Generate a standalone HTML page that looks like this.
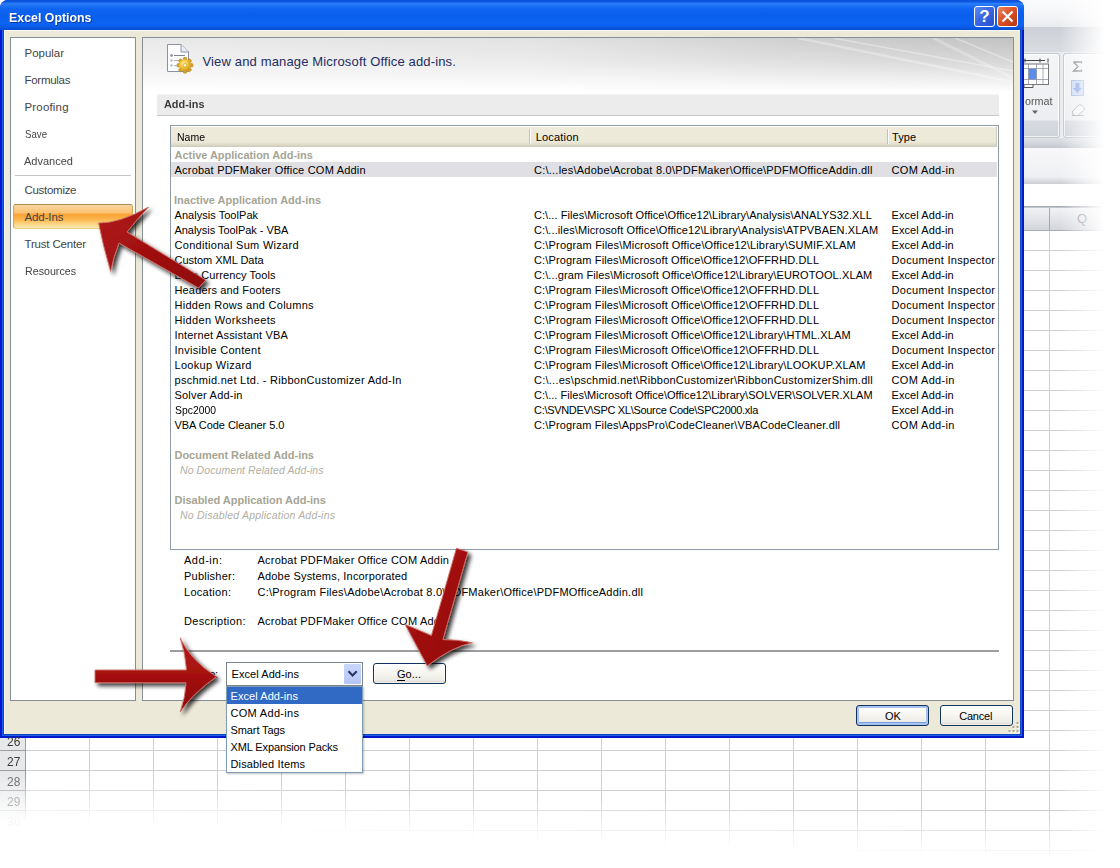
<!DOCTYPE html>
<html><head><meta charset="utf-8"><title>Excel Options</title>
<style>
html,body{margin:0;padding:0}
body{width:1120px;height:868px;overflow:hidden;background:#fff;position:relative;font:11px "Liberation Sans",sans-serif;color:#000}
div,span,svg{position:absolute;box-sizing:border-box}
.t{white-space:pre;line-height:16px;height:16px}
.ttl{text-shadow:1px 1px 0 #0b3aa6}
/* background spreadsheet */
#bg{left:0;top:0;width:1120px;height:868px;overflow:hidden}
#grid{left:0;top:230px;width:1120px;height:640px;
 background:
 repeating-linear-gradient(to right,#cdd1d6 0,#cdd1d6 1px,transparent 1px,transparent 64px) 25px 0,
 repeating-linear-gradient(to bottom,#cdd1d6 0,#cdd1d6 1px,transparent 1px,transparent 20px) 0 0;
 background-color:#fff}
#rowhdr{left:0;top:730px;width:26px;height:140px;background:
 repeating-linear-gradient(to bottom,#9a9da2 0,#9a9da2 1px,transparent 1px,transparent 20px),#e7e8ea;border-right:1px solid #9a9da2}
#fadeB{left:-40px;top:773px;width:1300px;height:220px;transform-origin:0 0;transform:rotate(2.2deg);
 background:linear-gradient(to bottom,rgba(255,255,255,0) 0,rgba(255,255,255,.5) 22px,#fff 46px,#fff 100%)}
#fadeR{left:1040px;top:0;width:80px;height:868px;background:linear-gradient(to right,rgba(255,255,255,0) 20px,rgba(255,255,255,.5) 42px,#fff 64px,#fff 100%)}
/* dialog */
#dlg{left:0;top:0;width:1024px;height:738px;background:#0019cf;border-radius:8px 8px 0 0;overflow:hidden}
#tbar{left:0;top:0;width:1024px;height:30px;background:linear-gradient(to bottom,#0a50d6 0%,#0e5ce6 7%,#2d7ef8 12%,#2074f6 18%,#0e64f0 30%,#0a5fee 55%,#0c63f2 80%,#0a5ae4 91%,#084cce 100%)}
#client{left:4px;top:30px;width:1016px;height:704px;background:#ece9d8;border-top:1px solid #fbfaf4;box-shadow:0 0 0 1px #0c48bc,0 0 0 2px #1e5cee,inset 1px 0 0 #f7f6f0}
.panel{background:#fff;border:1px solid #868f96}
#side{left:10px;top:37px;width:126px;height:664px}
#main{left:142px;top:37px;width:872px;height:664px;overflow:hidden}

/* main content */
#hdr{left:143px;top:38px;width:870px;height:56px;background:linear-gradient(to bottom,rgba(255,255,255,0) 0,rgba(255,255,255,.35) 24px,#fff 54px),linear-gradient(to right,#e9e9e9 0,#e2e2e2 45%,#cfcfcf 75%,#c2c2c2 100%)}
#streak{left:660px;top:38px;width:353px;height:56px;overflow:hidden}
#sec{left:157px;top:94px;width:842px;height:22px;background:#ececec;border-bottom:1px solid #c9c9c9;border-top:1px solid #f4f4f4}
#list{left:170px;top:125px;width:829px;height:425px;border:1px solid #8e9aa6;background:#fff}
#lhdr{left:171px;top:126px;width:826px;height:21px;border-top:1px solid #fff;border-right:1px solid #cfcbbb;background:linear-gradient(to bottom,#eeebdc 0,#ece9d8 15px,#e2decd 17px,#d6d2c2 19px,#cbc7b7 20px)}
.cdiv{width:2px;height:15px;top:129px;border-left:1px solid #c6c2b2;border-right:1px solid #fff}
#selrow{left:171px;top:162px;width:826px;height:15px;background:#dfdfe4}
#hr{left:170px;top:650px;width:829px;height:2px;background:#9d9da1}
#combo{left:226px;top:662px;width:137px;height:24px;border:1px solid #7d858c;background:#fff}
#cbtn{left:344px;top:664px;width:17px;height:20px;border-radius:1px;background:linear-gradient(to bottom,#c9d6fb 0,#c1cffa 50%,#b4c5f5 100%)}
#drop{left:226px;top:686px;width:137px;height:87px;border:1px solid #7f9db9;background:#fff;box-shadow:1px 1px 2px rgba(0,0,0,.25)}
#dsel{left:227px;top:687px;width:135px;height:17px;background:#316ac5}
.btn{height:21px;border:1px solid #12335e;border-radius:3px;background:linear-gradient(to bottom,#fff 0,#f6f5f0 50%,#ecebe5 85%,#d6d0c5 100%);box-shadow:inset 0 0 0 1px rgba(255,255,255,.6)}
#go{left:373px;top:663px;width:73px}
#ok{left:856px;top:705px;width:73px;box-shadow:inset 0 0 0 2px #a9c3f0,inset 0 -1px 0 2px #7b9fe0}
#cancel{left:940px;top:705px;width:73px}
.ul{height:1px;background:#000}
/* sidebar */
#sep{left:15px;top:175px;width:116px;height:1px;background:#c5c5c5}
#sel{left:13px;top:204px;width:120px;height:25px;border:1px solid #d6a84e;border-top-color:#ad8a52;border-bottom-color:#efcf82;border-radius:3px;background:linear-gradient(to bottom,#f9d6a4 0,#fbc373 33%,#f9a234 42%,#fbb64c 62%,#fdd98c 85%,#fee9ac 100%)}

.tb{top:6px;width:21px;height:21px;border:1px solid #fff;border-radius:3px}
#help{left:974px;background:linear-gradient(135deg,#5e8cf6 0,#3a66e4 45%,#2750cf 100%)}
#close{left:997px;background:linear-gradient(135deg,#ec8a64 0,#dc5228 45%,#b8340e 100%)}
#q{left:974px;top:6px;width:21px;height:21px;line-height:21px;text-align:center;color:#fff;font:bold 17px/21px "Liberation Sans",sans-serif}

/* ribbon bg */
#rtop{left:1020px;top:0;width:100px;height:27px;background:linear-gradient(to bottom,#fbfbfc 0,#f3f4f6 60%,#e9ebee 100%)}
#rband{left:1020px;top:27px;width:100px;height:25px;background:linear-gradient(to bottom,#cdd0d6 0,#d3d6db 50%,#d9dce1 100%)}
#rbody{left:1020px;top:52px;width:100px;height:86px;background:#e9ebef}
.rg{top:53px;height:85px;border:1px solid #c3c7ce;border-radius:3px;background:linear-gradient(to bottom,#f4f5f7 0,#eceef1 66px,#d7dae0 67px,#cfd3da 100%);box-shadow:inset 0 0 0 1px rgba(255,255,255,.7)}
#rg1{left:1010px;width:50px}
#rg2{left:1063px;width:70px}
#rbot{left:1020px;top:138px;width:100px;height:10px;background:linear-gradient(to bottom,#dfe1e5 0,#d3d6dc 50%,#c4c8cf 100%)}
#fbar{left:1020px;top:148px;width:100px;height:36px;background:linear-gradient(to bottom,#f8f8fa 0,#eeeff2 80%,#c9ccd2 100%)}
#fbar2{left:1020px;top:184px;width:100px;height:23px;background:#fff;border-bottom:1px solid #a9adb5}
#chdr{left:1020px;top:207px;width:100px;height:24px;background:linear-gradient(to bottom,#f1f2f4 0,#e2e4e8 50%,#d2d5db 100%);border-bottom:1px solid #a9adb5;border-top:1px solid #bfc3ca}
#chdiv{left:1049px;top:208px;width:1px;height:22px;background:#a4a8b0}
</style></head><body>
<div id="bg">
 <div id="grid"></div>
 <div id="rowhdr"></div>
 <div id="rtop"></div><div id="rband"></div><div id="rbody"></div>
 <div id="rg1" class="rg"></div><div id="rg2" class="rg"></div>
 <div id="rbot"></div><div id="fbar"></div><div id="fbar2"></div><div id="chdr"></div><div id="chdiv"></div>
 <svg style="left:1020px;top:52px" width="100" height="86" viewBox="0 0 100 86">
  <path d="M4 8.5H25M5 6.5V10.5M20 6.5V10.5M28 6.5V10.5" stroke="#444" stroke-width="1" fill="none"/>
  <rect x="2" y="12" width="26.5" height="20.5" fill="#fdfdfe" stroke="#777" stroke-width="1"/>
  <rect x="8.5" y="16.5" width="8" height="11" fill="#5b8ee8"/>
  <path d="M8.5 12V32.5M16.5 12V32.5M23 12V32.5M2 16.5H28M2 27.5H28" stroke="#889" stroke-width=".7" fill="none"/>
  <path d="M4 33V35.5H13V33" stroke="#555" stroke-width="1" fill="#fff"/>
  <path d="M12 58.5H18L15 62Z" fill="#666"/>
  <path d="M53.5 10H61.5V11.5M53.5 10L58 14.5L53.5 19H61.5V17.5" fill="none" stroke="#777" stroke-width="1.3"/>
  <rect x="51.5" y="28.5" width="12" height="15" fill="#c9d8f4" stroke="#9db4e0"/>
  <path d="M55.5 31H59.5V36H62L57.5 41L53 36H55.5Z" fill="#7fa0e0"/>
  <path d="M52 60L58 53.5Q60 52 62 53.5L64 55.5Q65 57 63.5 58.5L58 63.5H54Z M52 63.5H64" fill="#f4f4f6" stroke="#aaa" stroke-width="1"/>
 </svg>
 <span class="t" style="left:1077px;top:211px;font-size:13px;color:#8a8a8a">Q</span>
 <div id="fadeB"></div>
 <div id="fadeR"></div>
</div>
<div id="dlg">
 <div id="client"></div>
 <div id="tbar"></div>
 <div id="help" class="tb"></div><span id="q">?</span>
 <div id="close" class="tb"></div>
 <svg style="left:997px;top:6px" width="21" height="21" viewBox="0 0 21 21"><path d="M5.5 5.5L15.5 15.5M15.5 5.5L5.5 15.5" stroke="#fff" stroke-width="2.2" stroke-linecap="butt"/></svg>
 <div id="side" class="panel"></div>
 <div id="main" class="panel"></div>
 <div id="hdr"></div>
 <svg style="left:143px;top:38px" width="870" height="56" viewBox="0 0 870 56"><g stroke="#fff" fill="none"><path d="M655 0L870 44" stroke-width="2.5" opacity=".3"/><path d="M690 0L870 33" stroke-width="1.5" opacity=".35"/><path d="M790 0L870 40" stroke-width="3" opacity=".25"/><path d="M812 0L870 24" stroke-width="1.5" opacity=".35"/></g></svg>
 <div id="sec"></div>
 <div id="list"></div>
 <div id="lhdr"></div>
 <div class="cdiv" style="left:529px"></div>
 <div class="cdiv" style="left:887px"></div>
 <div id="selrow"></div>
 <div id="hr"></div>
 <div id="combo"></div>
 <div id="cbtn"></div>
 <svg style="left:344px;top:664px" width="17" height="20" viewBox="0 0 17 20"><path d="M4.5 7.3L8.6 11.5L12.7 7.3" fill="none" stroke="#27365f" stroke-width="2.1"/></svg>
 <svg style="left:164px;top:42px" width="30" height="32" viewBox="0 0 30 32">
  <defs><radialGradient id="gg" cx=".4" cy=".35" r=".7"><stop offset="0" stop-color="#fff2a0"/><stop offset=".5" stop-color="#f2c63a"/><stop offset="1" stop-color="#c8901a"/></radialGradient></defs>
  <path d="M3.5 2.5H17L24.5 10V29.5H3.5Z" fill="#fdfdfe" stroke="#8a93a6" stroke-width="1"/>
  <path d="M17 2.5V10H24.5" fill="#e8ecf4" stroke="#8a93a6" stroke-width="1"/>
  <circle cx="7.5" cy="13.5" r="1.3" fill="#7f8796"/><rect x="10" y="13" width="11" height="1" fill="#7f8796"/>
  <circle cx="7.5" cy="18.5" r="1.2" fill="#b4bac6"/><rect x="10" y="18" width="6" height="1" fill="#b4bac6"/>
  <circle cx="7.5" cy="23.5" r="1.2" fill="#b4bac6"/><rect x="10" y="23" width="4" height="1" fill="#b4bac6"/>
  <g transform="translate(21 23.3)">
   <g fill="#d9a520" stroke="#b07c10" stroke-width=".5">
    <rect x="-1.7" y="-8" width="3.4" height="16" rx="1.2"/>
    <rect x="-1.7" y="-8" width="3.4" height="16" rx="1.2" transform="rotate(45)"/>
    <rect x="-1.7" y="-8" width="3.4" height="16" rx="1.2" transform="rotate(90)"/>
    <rect x="-1.7" y="-8" width="3.4" height="16" rx="1.2" transform="rotate(135)"/>
   </g>
   <circle r="5.8" fill="url(#gg)"/>
   <circle r="1.8" fill="#fff7c8" stroke="#c8901a" stroke-width=".6"/>
  </g>
 </svg>
 <div id="go" class="btn"></div>
 <div id="ok" class="btn"></div>
 <div id="cancel" class="btn"></div>
 <svg style="left:1007px;top:721px" width="13" height="13" viewBox="0 0 13 13"><g fill="#fbfaf5"><rect x="10.5" y="2" width="2" height="2"/><rect x="6.5" y="6" width="2" height="2"/><rect x="10.5" y="6" width="2" height="2"/><rect x="2.5" y="10" width="2" height="2"/><rect x="6.5" y="10" width="2" height="2"/><rect x="10.5" y="10" width="2" height="2"/></g><g fill="#aca794"><rect x="9.5" y="1" width="2" height="2"/><rect x="5.5" y="5" width="2" height="2"/><rect x="9.5" y="5" width="2" height="2"/><rect x="1.5" y="9" width="2" height="2"/><rect x="5.5" y="9" width="2" height="2"/><rect x="9.5" y="9" width="2" height="2"/></g></svg>
 <div class="ul" style="left:397px;top:680px;width:8px"></div>
 <div id="sep"></div>
 <div id="sel"></div>
</div>
<div id="drop"></div>
<div id="dsel"></div>
<span class="t ttl" style="left:8.5px;top:9.5px;font-size:13px;color:#fff;font-weight:bold;transform:scaleX(0.9515);transform-origin:0 0;">Excel Options</span>
<span class="t" style="left:24.5px;top:45px;font-size:11.5px;color:#444;letter-spacing:-0.02px;">Popular</span>
<span class="t" style="left:24.5px;top:72px;font-size:11.5px;color:#444;letter-spacing:-0.28px;">Formulas</span>
<span class="t" style="left:24.5px;top:99px;font-size:11.5px;color:#444;letter-spacing:0.17px;">Proofing</span>
<span class="t" style="left:24.5px;top:126px;font-size:11.5px;color:#444;transform:scaleX(0.8391);transform-origin:0 0;">Save</span>
<span class="t" style="left:23.5px;top:153px;font-size:11.5px;color:#444;transform:scaleX(0.9578);transform-origin:0 0;">Advanced</span>
<span class="t" style="left:24.5px;top:182px;font-size:11.5px;color:#444;letter-spacing:-0.29px;">Customize</span>
<span class="t" style="left:24.5px;top:209px;font-size:11.5px;color:#444;letter-spacing:-0.11px;">Add-Ins</span>
<span class="t" style="left:24.5px;top:236px;font-size:11.5px;color:#444;letter-spacing:-0.18px;">Trust Center</span>
<span class="t" style="left:24.5px;top:263px;font-size:11.5px;color:#444;transform:scaleX(0.9278);transform-origin:0 0;">Resources</span>
<span class="t" style="left:202.5px;top:54px;font-size:13px;color:#1f2d63;letter-spacing:0.15px;">View and manage Microsoft Office add-ins.</span>
<span class="t" style="left:163.5px;top:96px;font-size:11.5px;color:#3c3c3c;font-weight:bold;transform:scaleX(0.946);transform-origin:0 0;">Add-ins</span>
<span class="t" style="left:176.5px;top:129px;transform:scaleX(0.9542);transform-origin:0 0;">Name</span>
<span class="t" style="left:535.7px;top:129px;letter-spacing:0.19px;">Location</span>
<span class="t" style="left:892px;top:129px;letter-spacing:0.05px;">Type</span>
<span class="t" style="left:174.5px;top:147px;color:#a5a594;font-weight:bold;letter-spacing:-0.03px;">Active Application Add-ins</span>
<span class="t" style="left:174px;top:192px;color:#a5a594;font-weight:bold;">Inactive Application Add-ins</span>
<span class="t" style="left:174.5px;top:447px;color:#a5a594;font-weight:bold;letter-spacing:-0.03px;">Document Related Add-ins</span>
<span class="t" style="left:174.5px;top:492px;color:#a5a594;font-weight:bold;letter-spacing:-0.02px;">Disabled Application Add-ins</span>
<span class="t" style="left:180px;top:462px;font-size:10.5px;color:#b0b0a3;font-style:italic;letter-spacing:0.08px;">No Document Related Add-ins</span>
<span class="t" style="left:180px;top:507px;font-size:10.5px;color:#b0b0a3;font-style:italic;letter-spacing:0.19px;">No Disabled Application Add-ins</span>
<span class="t" style="left:174.5px;top:162px;letter-spacing:0.21px;">Acrobat PDFMaker Office COM Addin</span>
<span class="t" style="left:534px;top:162px;letter-spacing:0.24px;">C:\...les\Adobe\Acrobat 8.0\PDFMaker\Office\PDFMOfficeAddin.dll</span>
<span class="t" style="left:891.5px;top:162px;letter-spacing:0.34px;">COM Add-in</span>
<span class="t" style="left:174.5px;top:207px;letter-spacing:0.04px;">Analysis ToolPak</span>
<span class="t" style="left:534px;top:207px;letter-spacing:0.06px;">C:\... Files\Microsoft Office\Office12\Library\Analysis\ANALYS32.XLL</span>
<span class="t" style="left:891.5px;top:207px;letter-spacing:0.08px;">Excel Add-in</span>
<span class="t" style="left:174.5px;top:222px;letter-spacing:-0.04px;">Analysis ToolPak - VBA</span>
<span class="t" style="left:534px;top:222px;letter-spacing:0.1px;">C:\...iles\Microsoft Office\Office12\Library\Analysis\ATPVBAEN.XLAM</span>
<span class="t" style="left:891.5px;top:222px;letter-spacing:0.08px;">Excel Add-in</span>
<span class="t" style="left:174.5px;top:237px;letter-spacing:0.29px;">Conditional Sum Wizard</span>
<span class="t" style="left:534px;top:237px;letter-spacing:0.17px;">C:\Program Files\Microsoft Office\Office12\Library\SUMIF.XLAM</span>
<span class="t" style="left:891.5px;top:237px;letter-spacing:0.08px;">Excel Add-in</span>
<span class="t" style="left:174.5px;top:252px;letter-spacing:-0.03px;">Custom XML Data</span>
<span class="t" style="left:534px;top:252px;letter-spacing:0.14px;">C:\Program Files\Microsoft Office\Office12\OFFRHD.DLL</span>
<span class="t" style="left:891.5px;top:252px;letter-spacing:0.3px;">Document Inspector</span>
<span class="t" style="left:174.5px;top:267px;letter-spacing:0.09px;">Euro Currency Tools</span>
<span class="t" style="left:534px;top:267px;letter-spacing:0.1px;">C:\...gram Files\Microsoft Office\Office12\Library\EUROTOOL.XLAM</span>
<span class="t" style="left:891.5px;top:267px;letter-spacing:0.08px;">Excel Add-in</span>
<span class="t" style="left:174.5px;top:282px;letter-spacing:0.15px;">Headers and Footers</span>
<span class="t" style="left:534px;top:282px;letter-spacing:0.14px;">C:\Program Files\Microsoft Office\Office12\OFFRHD.DLL</span>
<span class="t" style="left:891.5px;top:282px;letter-spacing:0.3px;">Document Inspector</span>
<span class="t" style="left:174.5px;top:297px;letter-spacing:0.26px;">Hidden Rows and Columns</span>
<span class="t" style="left:534px;top:297px;letter-spacing:0.14px;">C:\Program Files\Microsoft Office\Office12\OFFRHD.DLL</span>
<span class="t" style="left:891.5px;top:297px;letter-spacing:0.3px;">Document Inspector</span>
<span class="t" style="left:174.5px;top:312px;letter-spacing:0.33px;">Hidden Worksheets</span>
<span class="t" style="left:534px;top:312px;letter-spacing:0.14px;">C:\Program Files\Microsoft Office\Office12\OFFRHD.DLL</span>
<span class="t" style="left:891.5px;top:312px;letter-spacing:0.3px;">Document Inspector</span>
<span class="t" style="left:174.5px;top:327px;letter-spacing:0.19px;">Internet Assistant VBA</span>
<span class="t" style="left:534px;top:327px;letter-spacing:0.14px;">C:\Program Files\Microsoft Office\Office12\Library\HTML.XLAM</span>
<span class="t" style="left:891.5px;top:327px;letter-spacing:0.08px;">Excel Add-in</span>
<span class="t" style="left:174.5px;top:342px;letter-spacing:0.29px;">Invisible Content</span>
<span class="t" style="left:534px;top:342px;letter-spacing:0.14px;">C:\Program Files\Microsoft Office\Office12\OFFRHD.DLL</span>
<span class="t" style="left:891.5px;top:342px;letter-spacing:0.3px;">Document Inspector</span>
<span class="t" style="left:174.5px;top:357px;letter-spacing:0.3px;">Lookup Wizard</span>
<span class="t" style="left:534px;top:357px;letter-spacing:0.14px;">C:\Program Files\Microsoft Office\Office12\Library\LOOKUP.XLAM</span>
<span class="t" style="left:891.5px;top:357px;letter-spacing:0.08px;">Excel Add-in</span>
<span class="t" style="left:174.5px;top:372px;letter-spacing:0.27px;">pschmid.net Ltd. - RibbonCustomizer Add-In</span>
<span class="t" style="left:534px;top:372px;letter-spacing:0.25px;">C:\...es\pschmid.net\RibbonCustomizer\RibbonCustomizerShim.dll</span>
<span class="t" style="left:891.5px;top:372px;letter-spacing:0.34px;">COM Add-in</span>
<span class="t" style="left:174.5px;top:387px;letter-spacing:0.21px;">Solver Add-in</span>
<span class="t" style="left:534px;top:387px;letter-spacing:0.04px;">C:\... Files\Microsoft Office\Office12\Library\SOLVER\SOLVER.XLAM</span>
<span class="t" style="left:891.5px;top:387px;letter-spacing:0.08px;">Excel Add-in</span>
<span class="t" style="left:174.5px;top:402px;transform:scaleX(0.9439);transform-origin:0 0;">Spc2000</span>
<span class="t" style="left:534px;top:402px;letter-spacing:-0.3px;">C:\SVNDEV\SPC XL\Source Code\SPC2000.xla</span>
<span class="t" style="left:891.5px;top:402px;letter-spacing:0.08px;">Excel Add-in</span>
<span class="t" style="left:174.5px;top:417px;letter-spacing:-0.04px;">VBA Code Cleaner 5.0</span>
<span class="t" style="left:534px;top:417px;letter-spacing:0.13px;">C:\Program Files\AppsPro\CodeCleaner\VBACodeCleaner.dll</span>
<span class="t" style="left:891.5px;top:417px;letter-spacing:0.34px;">COM Add-in</span>
<span class="t" style="left:184px;top:552px;letter-spacing:0.52px;">Add-in:</span>
<span class="t" style="left:184px;top:568px;letter-spacing:0.23px;">Publisher:</span>
<span class="t" style="left:184px;top:584px;letter-spacing:0.29px;">Location:</span>
<span class="t" style="left:184px;top:613px;letter-spacing:0.31px;">Description:</span>
<span class="t" style="left:257.5px;top:552px;letter-spacing:0.22px;">Acrobat PDFMaker Office COM Addin</span>
<span class="t" style="left:257.5px;top:568px;letter-spacing:0.18px;">Adobe Systems, Incorporated</span>
<span class="t" style="left:257.5px;top:584px;letter-spacing:0.24px;">C:\Program Files\Adobe\Acrobat 8.0\PDFMaker\Office\PDFMOfficeAddin.dll</span>
<span class="t" style="left:257.5px;top:613px;letter-spacing:0.22px;">Acrobat PDFMaker Office COM Addin</span>
<span class="t" style="left:177px;top:666px;letter-spacing:-0.3px;">Manage:</span>
<span class="t" style="left:231.5px;top:666px;letter-spacing:0.07px;">Excel Add-ins</span>
<span class="t" style="left:230.5px;top:688px;color:#fff;letter-spacing:0.07px;">Excel Add-ins</span>
<span class="t" style="left:230.5px;top:705px;letter-spacing:0.31px;">COM Add-ins</span>
<span class="t" style="left:230.5px;top:722px;letter-spacing:-0.1px;">Smart Tags</span>
<span class="t" style="left:230.5px;top:739px;letter-spacing:-0.12px;">XML Expansion Packs</span>
<span class="t" style="left:230.5px;top:756px;letter-spacing:0.13px;">Disabled Items</span>
<span class="t" style="left:397px;top:666px;letter-spacing:0.04px;">Go...</span>
<span class="t" style="left:885px;top:707.5px;">OK</span>
<span class="t" style="left:959.2px;top:707.5px;letter-spacing:-0.21px;">Cancel</span>
<span class="t" style="left:6.5px;top:734px;font-size:12.5px;color:#3c3c3c;transform:scaleX(0.9564);transform-origin:0 0;">26</span>
<span class="t" style="left:6.5px;top:754px;font-size:12.5px;color:#3c3c3c;transform:scaleX(0.9564);transform-origin:0 0;">27</span>
<span class="t" style="left:6.5px;top:774px;font-size:12.5px;color:#747474;transform:scaleX(0.9564);transform-origin:0 0;">28</span>
<span class="t" style="left:6.5px;top:794px;font-size:12.5px;color:#b8b8b8;transform:scaleX(0.9564);transform-origin:0 0;">29</span>
<span class="t" style="left:6.5px;top:814px;font-size:12.5px;color:#f6f6f6;transform:scaleX(0.9564);transform-origin:0 0;">30</span>
<span class="t" style="left:1024.5px;top:92.5px;font-size:11.5px;color:#555;transform:scaleX(0.9352);transform-origin:0 0;">ormat</span>
<svg id="arrows" width="1120" height="868" viewBox="0 0 1120 868" style="left:0;top:0;pointer-events:none">
<defs>
<filter id="sh" x="-20%" y="-20%" width="150%" height="150%"><feGaussianBlur in="SourceAlpha" stdDeviation="2"/><feOffset dx="3" dy="3.2"/><feComponentTransfer><feFuncA type="linear" slope="0.78"/></feComponentTransfer><feMerge><feMergeNode/><feMergeNode in="SourceGraphic"/></feMerge></filter>
<linearGradient id="ar1" x1="0" y1="0" x2="1" y2="1"><stop offset="0" stop-color="#b01616"/><stop offset="1" stop-color="#900b0b"/></linearGradient>
<linearGradient id="ar2" x1="0" y1="0" x2="0" y2="1"><stop offset="0" stop-color="#b61c18"/><stop offset=".5" stop-color="#a41110"/><stop offset="1" stop-color="#8c0a0a"/></linearGradient>
</defs>
<g filter="url(#sh)" stroke="#d0746a" stroke-width="0.9" stroke-linejoin="round">
<path fill="url(#ar1)" d="M98.6 223 Q119 223.5 148.6 207 Q137 219 127 232 L205.7 280 L198.6 288 L119 243 Q113 258 110.7 271.4 Q103 246 98.6 223Z"/>
<path fill="url(#ar2)" d="M95 670 L186.5 670 Q185.5 654 180.2 637.8 Q190.5 660.5 216.5 676.7 Q192.5 693.5 180.2 711.9 Q185.5 697 186 682.7 L95 682.7Z"/>
<path fill="url(#ar1)" d="M456.4 548.3 L467.9 552 L442.9 639.6 Q457 639.5 472.5 642.8 Q452 646.5 427.3 665.9 L405.1 624.4 L431.4 635.5Z"/>
</g>
</svg>
</body></html>
